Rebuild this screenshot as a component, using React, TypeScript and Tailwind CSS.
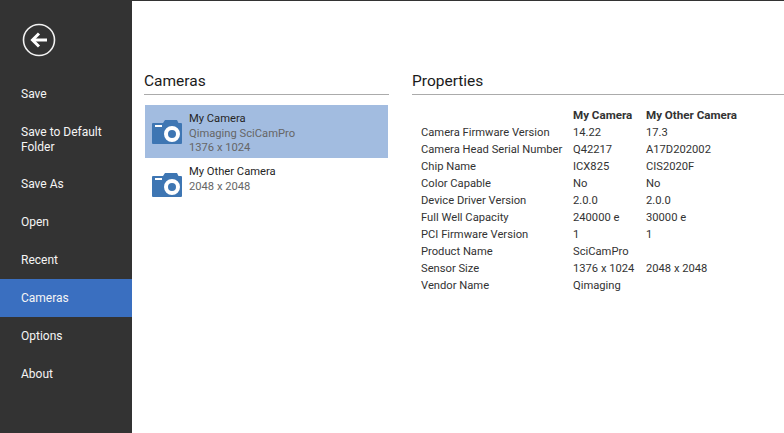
// App.tsx
// Backstage-style settings page: nav on the left, camera list and properties on the right.

const navItems = [
  { label: 'Save' },
  { label: 'Save to Default Folder', tall: true },
  { label: 'Save As' },
  { label: 'Open' },
  { label: 'Recent' },
  { label: 'Cameras', active: true },
  { label: 'Options' },
  { label: 'About' },
];

const cameras = [
  { name: 'My Camera', lines: ['Qimaging SciCamPro', '1376 x 1024'], selected: true },
  { name: 'My Other Camera', lines: ['2048 x 2048'] },
];

const properties = [
  ['Camera Firmware Version', '14.22', '17.3'],
  ['Camera Head Serial Number', 'Q42217', 'A17D202002'],
  ['Chip Name', 'ICX825', 'CIS2020F'],
  ['Color Capable', 'No', 'No'],
  ['Device Driver Version', '2.0.0', '2.0.0'],
  ['Full Well Capacity', '240000 e', '30000 e'],
  ['PCI Firmware Version', '1', '1'],
  ['Product Name', 'SciCamPro', ''],
  ['Sensor Size', '1376 x 1024', '2048 x 2048'],
  ['Vendor Name', 'Qimaging', ''],
];

function BackIcon() {
  return (
    <svg width="34" height="34" viewBox="0 0 34 34" fill="none">
      <circle cx="17" cy="17" r="15.500" stroke="#f2f2f2" strokeWidth="1.600" />
      <path d="M25 17H11" stroke="#fff" strokeWidth="3" />
      <path d="M17 10.500 10.500 17l6.500 6.500" stroke="#fff" strokeWidth="3" />
    </svg>
  );
}

function CameraIcon() {
  return (
    <svg width="30" height="24" viewBox="0 0 30 24" className="shrink-0">
      <path
        fill="#3e76b3"
        d="M1 3h10l2-3h12l1.500 3H29a1 1 0 0 1 1 1V23a1 1 0 0 1-1 1H1a1 1 0 0 1-1-1V4a1 1 0 0 1 1-1z"
      />
      <rect x="3" y="5" width="7" height="2" fill="#fff" />
      <circle cx="20" cy="14" r="6" fill="none" stroke="#fff" strokeWidth="4" />
    </svg>
  );
}

export default function App() {
  return (
    <div className="flex h-[433px] w-[784px] overflow-hidden bg-white font-['Roboto','Noto_Sans',sans-serif] text-[11.2px] text-[#262626]">
      {/* Sidebar */}
      <nav className="flex w-[132px] shrink-0 flex-col bg-[#333333] text-[12px] text-[#f5f5f5]">
        <div className="h-[75px] pl-[22px] pt-[23px]">
          <BackIcon />
        </div>
        {navItems.map((item) => (
          <div
            key={item.label}
            className={`flex items-center pl-[21px] pr-2 pt-px leading-[15px] ${item.tall ? 'h-[52px]' : 'h-[38px]'} ${item.active ? 'bg-[#3a6fc0]' : ''}`}
          >
            {item.label}
          </div>
        ))}
      </nav>

      {/* Main */}
      <main className="flex flex-1 border-t border-[#333333] pt-[70px]">
        {/* Cameras */}
        <section className="ml-[12px] w-[245px] shrink-0">
          <h2 className="border-b border-[#ababab] pb-[2px] text-[15.5px] leading-[21px] text-[#1a1a1a]">Cameras</h2>
          <div className="mt-[10px] pl-px pr-px">
            {cameras.map((cam) => (
              <div
                key={cam.name}
                className={`flex gap-[7px] pl-[7px] ${cam.selected ? 'h-[53px] bg-[#a2bce0]' : 'h-[38px]'}`}
              >
                <div className="pt-[15px]">
                  <CameraIcon />
                </div>
                <div className="pt-[7px] leading-[14px]">
                  <div className="mb-px">{cam.name}</div>
                  {cam.lines.map((line) => (
                    <div key={line} className="text-[#666666]">{line}</div>
                  ))}
                </div>
              </div>
            ))}
          </div>
        </section>

        {/* Properties */}
        <section className="ml-[23px] flex-1">
          <h2 className="border-b border-[#ababab] pb-[2px] text-[15.5px] leading-[21px] text-[#1a1a1a]">Properties</h2>
          <div className="mt-[12px] pl-[9px]">
            <div className="grid grid-cols-[152px_73px_1fr] text-[11.6px] font-bold leading-[17px] text-[#333333]">
              <span />
              <span>My Camera</span>
              <span>My Other Camera</span>
            </div>
            {properties.map(([label, a, b]) => (
              <div key={label} className="grid grid-cols-[152px_73px_1fr] leading-[17px] text-[#333333]">
                <span>{label}</span>
                <span>{a}</span>
                <span>{b}</span>
              </div>
            ))}
          </div>
        </section>
      </main>
    </div>
  );
}
